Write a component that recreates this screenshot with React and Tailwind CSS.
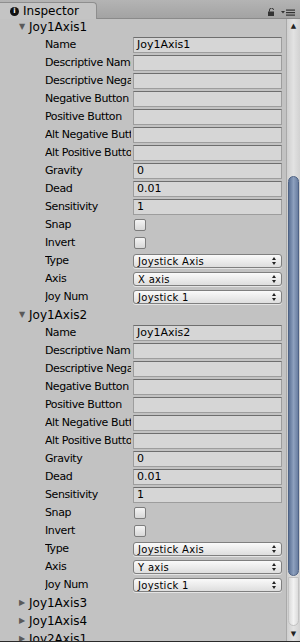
import React from 'react';

const axes = [
  { name: 'Joy1Axis1', axis: 'X axis', open: true },
  { name: 'Joy1Axis2', axis: 'Y axis', open: true },
  { name: 'Joy1Axis3', open: false },
  { name: 'Joy1Axis4', open: false },
  { name: 'Joy2Axis1', open: false },
];

const TextField = ({ value }) => (
  <div className="h-[16px] flex-1 mr-[4px] bg-[#d6d6d6] border border-[#9d9d9d] border-t-[#6e6e6e] pl-[3px] text-[11px] leading-[14px] text-black">
    {value}
  </div>
);

const Checkbox = () => (
  <div className="ml-[1px] w-[12px] h-[12px] rounded-[2px] border border-[#7d7d7d] bg-gradient-to-b from-[#f4f4f4] to-[#d8d8d8]" />
);

const Popup = ({ value }) => (
  <div className="h-[14px] flex-1 mr-[4px] flex items-center justify-between rounded-[3px] border border-[#7f7f7f] bg-gradient-to-b from-[#fafafa] to-[#dedede] pl-[4px] pr-[5px] text-[10px] tracking-[0.3px] text-black shadow-[0_1px_0_#e4e4e4]">
    <span>{value}</span>
    <svg width="4" height="8" viewBox="0 0 4 8">
      <path d="M0 3 L2 0 L4 3z" fill="#222" />
      <path d="M0 5 L2 8 L4 5z" fill="#222" />
    </svg>
  </div>
);

const Row = ({ label, children }) => (
  <div className="h-[18px] flex items-center">
    <div className="w-[133px] shrink-0 pl-[45px] pr-[2px] overflow-hidden whitespace-nowrap text-[11px] tracking-[-0.4px] text-black">
      <div className="overflow-hidden">{label}</div>
    </div>
    <div className="flex-1 flex items-center">{children}</div>
  </div>
);

const AxisBlock = ({ name, axis }) => (
  <>
    <Row label="Name"><TextField value={name} /></Row>
    <Row label="Descriptive Name"><TextField value="" /></Row>
    <Row label="Descriptive Negative Name"><TextField value="" /></Row>
    <Row label="Negative Button"><TextField value="" /></Row>
    <Row label="Positive Button"><TextField value="" /></Row>
    <Row label="Alt Negative Button"><TextField value="" /></Row>
    <Row label="Alt Positive Button"><TextField value="" /></Row>
    <Row label="Gravity"><TextField value="0" /></Row>
    <Row label="Dead"><TextField value="0.01" /></Row>
    <Row label="Sensitivity"><TextField value="1" /></Row>
    <Row label="Snap"><Checkbox /></Row>
    <Row label="Invert"><Checkbox /></Row>
    <Row label="Type"><Popup value="Joystick Axis" /></Row>
    <Row label="Axis"><Popup value={axis} /></Row>
    <Row label="Joy Num"><Popup value="Joystick 1" /></Row>
  </>
);

const Foldout = ({ name, open }) => (
  <div className="h-[18px] flex items-center pl-[19px] text-[12px] text-black">
    <span className="w-[10px] text-[8px] text-[#5a5a5a] leading-none">{open ? '▼' : '▶'}</span>
    <span>{name}</span>
  </div>
);

export default function App() {
  return (
    <div
      className="w-[300px] h-[642px] overflow-hidden flex flex-col bg-[#c2c2c2] border-b border-[#2a2a2a]"
      style={{ fontFamily: '"DejaVu Sans", "Liberation Sans", sans-serif' }}
    >
      {/* Tab bar */}
      <div className="h-[19px] shrink-0 flex items-end justify-between bg-gradient-to-b from-[#b4b4b4] to-[#a3a3a3] border-b border-[#8a8a8a]">
        <div className="h-[17px] w-[97px] -mb-[1px] flex items-center gap-[4px] pl-[10px] bg-[#c4c4c4] border-t border-r border-[#8e8e8e] rounded-tr-[4px] text-[12px] text-black">
          <span className="w-[9px] h-[9px] rounded-full bg-[#111] text-white text-[7px] font-bold leading-[9px] text-center">i</span>
          <span>Inspector</span>
        </div>
        <div className="flex items-center gap-[6px] pr-[5px] pb-[2px]">
          <svg width="7" height="8" viewBox="0 0 7 8">
            <path d="M1.5 3.5 V2 a2 2 0 0 1 4 0" fill="none" stroke="#333" strokeWidth="1" />
            <rect x="0" y="3.5" width="6" height="4.5" fill="#333" />
          </svg>
          <svg width="14" height="7" viewBox="0 0 14 7">
            <path d="M0 2 h4 l-2 2.5z" fill="#333" />
            <rect x="5" y="0.5" width="9" height="1.2" fill="#333" />
            <rect x="5" y="3" width="9" height="1.2" fill="#333" />
            <rect x="5" y="5.5" width="9" height="1.2" fill="#333" />
          </svg>
        </div>
      </div>

      <div className="flex-1 flex min-h-0">
        {/* Content */}
        <div className="flex-1 -mt-[1px] overflow-hidden">
          {axes.map((a) => (
            <React.Fragment key={a.name}>
              <Foldout name={a.name} open={a.open} />
              {a.open && <AxisBlock name={a.name} axis={a.axis} />}
            </React.Fragment>
          ))}
        </div>

        {/* Scrollbar */}
        <div className="w-[14px] shrink-0 flex flex-col bg-gradient-to-r from-[#cfcfcf] via-[#e2e2e2] to-[#d2d2d2] border-l border-[#a9a9a9]">
          <div className="h-[14px] flex items-center justify-center text-[7px] text-[#222]">▲</div>
          <div className="h-[143px]" />
          <div className="h-[400px] mx-[1px] rounded-full bg-gradient-to-r from-[#5d7396] via-[#8da0be] to-[#6a7fa1] border border-[#4e6284]" />
          <div className="flex-1 mx-[1px] mt-[1px] mb-[1px] rounded-b-full bg-gradient-to-r from-[#dadada] via-[#f2f2f2] to-[#dcdcdc] border border-[#c2c2c2]" />
          <div className="h-[14px] flex items-center justify-center text-[7px] text-[#222]">▼</div>
        </div>
      </div>
    </div>
  );
}
